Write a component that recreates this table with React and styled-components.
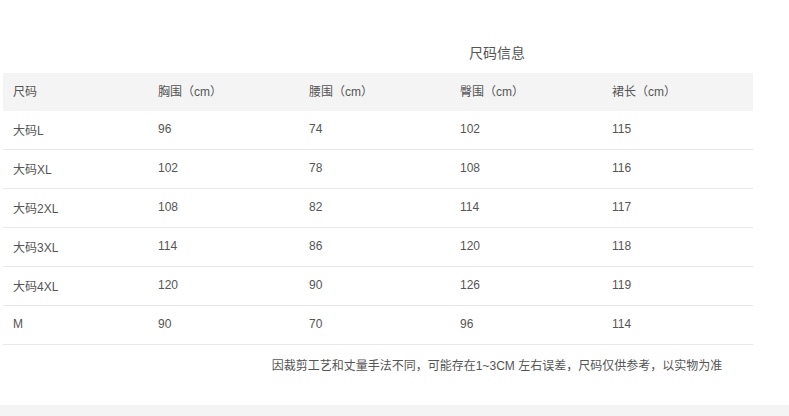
import styled, { createGlobalStyle } from "styled-components";

const GlobalStyle = createGlobalStyle`
body {
    margin: 0;
    background-color: white;
    font-family: "Liberation Sans", "Noto Sans CJK SC", sans-serif;
}
`

const columns = ["尺码", "胸围（cm）", "腰围（cm）", "臀围（cm）", "裙长（cm）"]
const widths = [145, 151, 151, 152, 151]

const rows = [
    ["大码L", "96", "74", "102", "115"],
    ["大码XL", "102", "78", "108", "116"],
    ["大码2XL", "108", "82", "114", "117"],
    ["大码3XL", "114", "86", "120", "118"],
    ["大码4XL", "120", "90", "126", "119"],
    ["M", "90", "70", "96", "114"],
]

const App = () => {
    return (
        <>
            <GlobalStyle />
            <Page>
                <Title>尺码信息</Title>
                <Table>
                    <colgroup>
                        {widths.map((w, i) => <col key={i} style={{ width: w }} />)}
                    </colgroup>
                    <thead>
                        <tr>
                            {columns.map((c) => <Th key={c}>{c}</Th>)}
                        </tr>
                    </thead>
                    <tbody>
                        {rows.map((r) => (
                            <tr key={r[0]}>
                                {r.map((v, i) => <Td key={i}>{v}</Td>)}
                            </tr>
                        ))}
                    </tbody>
                </Table>
                <Note>因裁剪工艺和丈量手法不同，可能存在1~3CM 左右误差，尺码仅供参考，以实物为准</Note>
            </Page>
            <BottomBand />
        </>
    )
};

const Page = styled.div`
height: 405px;
padding-top: 43px;
box-sizing: border-box;
color: #555;
`

const Title = styled.div`
padding-left: 205px;
text-align: center;
font-size: 14px;
line-height: 20px;
height: 30px;
`

const Table = styled.table`
margin-left: 3px;
width: 750px;
table-layout: fixed;
border-collapse: collapse;
font-size: 12px;
`

const Th = styled.th`
height: 35px;
padding: 0 0 3px 10px;
text-align: left;
font-weight: 400;
background-color: #f4f4f4;
`

const Td = styled.td`
height: 36px;
padding: 0 0 2px 10px;
border-bottom: 1px solid #e8e8e8;
`

const Note = styled.div`
padding-left: 205px;
margin-top: 13px;
text-align: center;
font-size: 12px;
line-height: 16px;
`

const BottomBand = styled.div`
height: 11px;
background-color: #f4f4f4;
`

export default App;
